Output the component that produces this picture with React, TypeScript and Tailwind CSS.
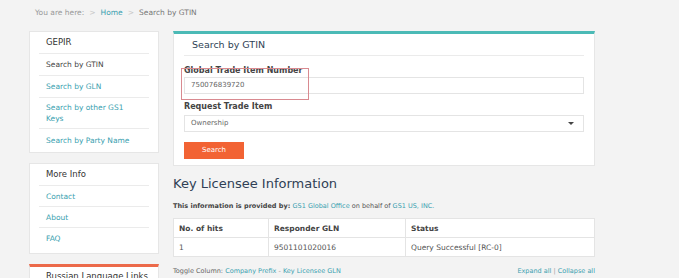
import React from "react";

const font = { fontFamily: '"DejaVu Sans", Verdana, sans-serif' };

function SideItem({ children, link = true, last = false, h = "h-[22px]" }: { children: React.ReactNode; link?: boolean; last?: boolean; h?: string }) {
  return (
    <div className={`${h} flex items-center pl-[7px] ${last ? "" : "border-b border-[#ebebeb]"} ${link ? "text-[#3a9fb0]" : "text-[#444]"}`}>
      {children}
    </div>
  );
}

export default function App() {
  return (
    <div style={font} className="w-[679px] h-[278px] overflow-hidden bg-[#f3f3f3] text-[7.5px] leading-[11px] text-[#555]">
      {/* breadcrumb */}
      <div className="h-[25px] pl-[35px] pt-[7px] flex gap-[5px] text-[#999]">
        <span>You are here:</span>
        <span className="text-[#c8c8c8]">&gt;</span>
        <span className="text-[#3a9fb0]">Home</span>
        <span className="text-[#c8c8c8]">&gt;</span>
        <span className="text-[#777]">Search by GTIN</span>
      </div>
      <div className="flex pl-[29px] pt-[6px] gap-[14px]">
        {/* sidebar */}
        <div className="w-[130px] flex flex-col gap-[10px]">
          <div className="bg-white border border-[#e6e6e6] px-[9px] pb-[1px]">
            <div className="h-[22px] flex items-center pl-[7px] border-b border-[#ebebeb] text-[#333] text-[8.5px]">GEPIR</div>
            <SideItem link={false}>Search by GTIN</SideItem>
            <SideItem>Search by GLN</SideItem>
            <SideItem h="h-[31px]">Search by other GS1<br />Keys</SideItem>
            <SideItem last>Search by Party Name</SideItem>
          </div>
          <div className="bg-white border border-[#e6e6e6] px-[9px] pb-[4px]">
            <div className="h-[22px] flex items-center pl-[7px] border-b border-[#ebebeb] text-[#333] text-[8.5px]">More Info</div>
            <SideItem h="h-[21px]">Contact</SideItem>
            <SideItem h="h-[21px]">About</SideItem>
            <SideItem h="h-[21px]" last>FAQ</SideItem>
          </div>
          <div className="bg-white border border-[#e6e6e6] border-t-[3px] border-t-[#ec6a4a] px-[9px] h-[30px]">
            <div className="pl-[7px] pt-[4px] text-[#333] text-[8.5px]">Russian Language Links</div>
          </div>
        </div>
        {/* main */}
        <div className="w-[422px] flex flex-col">
          <div className="relative bg-white border border-[#e6e6e6] border-t-[3px] border-t-[#4bbab6] px-[10px] pb-[6px]">
            <div className="h-[22px] flex items-center pl-[8px] border-b border-[#ebebeb] text-[#2f3f55] text-[9.5px]">Search by GTIN</div>
            <div className="pt-[10px] font-bold text-[#444] text-[8px] leading-[10px]">Global Trade Item Number</div>
            <div className="mt-[1px] h-[17px] border-[1.5px] border-[#e4e4e4] flex items-center pl-[6px] text-[#666] text-[7px]">750076839720</div>
            <div className="mt-[8px] font-bold text-[#444] text-[8px] leading-[10px]">Request Trade Item</div>
            <div className="mt-[3px] h-[17px] border-[1.5px] border-[#e4e4e4] flex items-center justify-between pl-[6px] pr-[9px] text-[#666] text-[7px]">
              <span>Ownership</span>
              <span className="w-0 h-0 border-l-[3px] border-r-[3px] border-t-[3px] border-l-transparent border-r-transparent border-t-[#444]" />
            </div>
            <button className="mt-[10px] w-[60px] h-[17px] bg-[#f26334] text-white text-[7px] flex items-center justify-center">Search</button>
            <div className="absolute left-[7px] top-[34px] w-[128px] h-[32px] border border-[#d98a90]" />
          </div>
          <div className="mt-[10px] text-[#2f3f55] text-[13px] leading-[16px]">Key Licensee Information</div>
          <div className="mt-[10px] text-[6.5px] leading-[9px]">
            <span className="font-bold text-[#444]">This information is provided by: </span>
            <span className="text-[#3a9fb0]">GS1 Global Office</span>
            <span className="text-[#555]"> on behalf of </span>
            <span className="text-[#3a9fb0]">GS1 US, INC.</span>
          </div>
          <div className="mt-[7px] bg-white border border-[#e4e4e4] text-[7.5px]">
            <div className="flex h-[19px] border-b border-[#e4e4e4] font-bold text-[#444]">
              <div className="w-[95px] pl-[5px] flex items-center border-r border-[#e4e4e4]">No. of hits</div>
              <div className="w-[137px] pl-[5px] flex items-center border-r border-[#e4e4e4]">Responder GLN</div>
              <div className="flex-1 pl-[5px] flex items-center">Status</div>
            </div>
            <div className="flex h-[18px] text-[#555]">
              <div className="w-[95px] pl-[5px] flex items-center border-r border-[#e4e4e4]">1</div>
              <div className="w-[137px] pl-[5px] flex items-center border-r border-[#e4e4e4]">9501101020016</div>
              <div className="flex-1 pl-[5px] flex items-center">Query Successful [RC-0]</div>
            </div>
          </div>
          <div className="mt-[10px] flex justify-between text-[6.5px] leading-[9px]">
            <div>
              <span className="text-[#666]">Toggle Column: </span>
              <span className="text-[#3a9fb0]">Company Prefix</span>
              <span className="text-[#999]"> - </span>
              <span className="text-[#3a9fb0]">Key Licensee GLN</span>
            </div>
            <div>
              <span className="text-[#3a9fb0]">Expand all</span>
              <span className="text-[#999]"> | </span>
              <span className="text-[#3a9fb0]">Collapse all</span>
            </div>
          </div>
        </div>
      </div>
    </div>
  );
}
